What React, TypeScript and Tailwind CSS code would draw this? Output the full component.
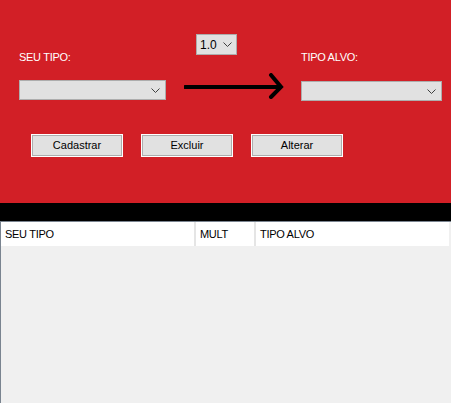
import React from 'react';

const Chevron: React.FC = () => (
  <svg width="9" height="5" viewBox="0 0 9 5" className="shrink-0">
    <path d="M0.5 0.5 L4.5 4.5 L8.5 0.5" fill="none" stroke="#404040" strokeWidth="1" />
  </svg>
);

const Combo: React.FC<{ width: string; value?: string }> = ({ width, value }) => (
  <div
    className={`${width} h-[20px] bg-[#e1e1e1] border border-[#adadad] flex items-center justify-between pl-[3px] pr-[5px] text-[12px] text-black`}
  >
    <span>{value}</span>
    <Chevron />
  </div>
);

const Button: React.FC<{ label: string }> = ({ label }) => (
  <div className="w-[92px] h-[23px] border border-white p-0 bg-white">
    <div className="w-full h-full bg-[#e1e1e1] border border-[#adadad] flex items-center justify-center text-[11px] text-black">
      {label}
    </div>
  </div>
);

const App: React.FC = () => {
  return (
    <div
      className="w-[451px] h-[403px] overflow-hidden flex flex-col bg-[#f0f0f0]"
      style={{ fontFamily: '"Liberation Sans", Arial, sans-serif' }}
    >
      {/* top form */}
      <div className="h-[203px] bg-[#d21f26] flex flex-col pt-[34px]">
        <div className="flex items-start">
          <div className="ml-[19px] w-[147px] flex flex-col">
            <div className="mt-[17px] h-[13px] leading-[13px] text-[11px] tracking-[-0.3px] text-white">SEU TIPO:</div>
            <div className="mt-[16px]">
              <Combo width="w-[147px]" />
            </div>
          </div>
          <div className="w-[135px] flex flex-col">
            <div className="ml-[30px] w-[41px] h-[21px] bg-[#e1e1e1] border border-[#adadad] flex items-center justify-between pl-[3px] pr-[4px] text-[12px] text-black">
              <span>1.0</span>
              <Chevron />
            </div>
            <svg width="100" height="26" viewBox="0 0 100 26" className="ml-[18px] mt-[18px]">
              <path d="M1 14 L96 14" stroke="#000" strokeWidth="4" strokeLinecap="round" />
              <path d="M87 2 L97 14 L87 24" fill="none" stroke="#000" strokeWidth="4" strokeLinecap="round" strokeLinejoin="miter" />
            </svg>
          </div>
          <div className="w-[141px] flex flex-col">
            <div className="mt-[17px] h-[13px] leading-[13px] text-[11px] tracking-[-0.3px] text-white">TIPO ALVO:</div>
            <div className="mt-[17px]">
              <Combo width="w-[141px]" />
            </div>
          </div>
        </div>
        <div className="mt-[33px] ml-[31px] flex gap-[18px]">
          <Button label="Cadastrar" />
          <Button label="Excluir" />
          <Button label="Alterar" />
        </div>
      </div>

      {/* black band */}
      <div className="h-[18px] bg-black" />

      {/* table */}
      <div className="flex-1 border-t border-l border-[#7a8490] flex flex-col">
        <div className="flex h-[24px] text-[11px] tracking-[-0.3px] text-black">
          <div className="w-[193px] bg-white flex items-center pl-[4px]">SEU TIPO</div>
          <div className="w-[2px] bg-[#e5e5e5]" />
          <div className="w-[58px] bg-white flex items-center pl-[4px]">MULT</div>
          <div className="w-[2px] bg-[#e5e5e5]" />
          <div className="w-[193px] bg-white flex items-center pl-[4px]">TIPO ALVO</div>
        </div>
        <div className="flex-1" />
      </div>
    </div>
  );
};

export default App;
